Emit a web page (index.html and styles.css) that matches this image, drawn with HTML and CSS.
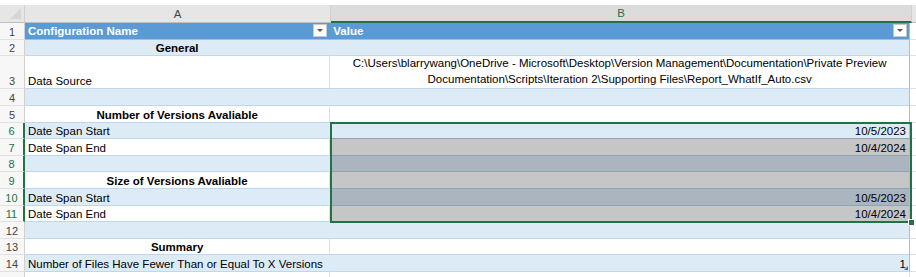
FILE: index.html
```html
<!DOCTYPE html>
<html lang="en">
<head>
  <meta charset="UTF-8" />
  <title>Configuration</title>
  <link rel="stylesheet" href="styles.css">
</head>
<body>
  <div class="sheet">
    <div class="head-row">
      <div class="corner"><span class="tri"></span></div>
      <div class="col-head a">A</div>
      <div class="col-head b on">B</div>
      <div class="col-head c"></div>
    </div>

    <div class="row title">
      <div class="rn">1</div>
      <div class="cell a"><span>Configuration Name</span><span class="filter"></span></div>
      <div class="cell b"><span>Value</span><span class="filter"></span></div>
      <div class="cell c"></div>
    </div>
    <div class="row band">
      <div class="rn">2</div>
      <div class="cell a center bold">General</div>
      <div class="cell b"></div>
      <div class="cell c"></div>
    </div>
    <div class="row tall">
      <div class="rn">3</div>
      <div class="cell a">Data Source</div>
      <div class="cell b center">C:\Users\blarrywang\OneDrive - Microsoft\Desktop\Version Management\Documentation\Private Preview<br>Documentation\Scripts\Iteration 2\Supporting Files\Report_WhatIf_Auto.csv</div>
      <div class="cell c"></div>
    </div>
    <div class="row band">
      <div class="rn">4</div>
      <div class="cell a"></div>
      <div class="cell b"></div>
      <div class="cell c"></div>
    </div>
    <div class="row">
      <div class="rn">5</div>
      <div class="cell a center bold">Number of Versions Avaliable</div>
      <div class="cell b"></div>
      <div class="cell c"></div>
    </div>
    <div class="row band picked">
      <div class="rn">6</div>
      <div class="cell a">Date Span Start</div>
      <div class="cell b right">10/5/2023</div>
      <div class="cell c"></div>
    </div>
    <div class="row picked">
      <div class="rn">7</div>
      <div class="cell a">Date Span End</div>
      <div class="cell b sel right">10/4/2024</div>
      <div class="cell c"></div>
    </div>
    <div class="row band picked">
      <div class="rn">8</div>
      <div class="cell a"></div>
      <div class="cell b sel"></div>
      <div class="cell c"></div>
    </div>
    <div class="row picked">
      <div class="rn">9</div>
      <div class="cell a center bold">Size of Versions Avaliable</div>
      <div class="cell b sel"></div>
      <div class="cell c"></div>
    </div>
    <div class="row band picked">
      <div class="rn">10</div>
      <div class="cell a">Date Span Start</div>
      <div class="cell b sel right">10/5/2023</div>
      <div class="cell c"></div>
    </div>
    <div class="row picked">
      <div class="rn">11</div>
      <div class="cell a">Date Span End</div>
      <div class="cell b sel right">10/4/2024</div>
      <div class="cell c"></div>
    </div>
    <div class="row band">
      <div class="rn">12</div>
      <div class="cell a"></div>
      <div class="cell b"></div>
      <div class="cell c"></div>
    </div>
    <div class="row">
      <div class="rn">13</div>
      <div class="cell a center bold">Summary</div>
      <div class="cell b"></div>
      <div class="cell c"></div>
    </div>
    <div class="row band last">
      <div class="rn">14</div>
      <div class="cell a">Number of Files Have Fewer Than or Equal To X Versions</div>
      <div class="cell b right">1<span class="resize"></span></div>
      <div class="cell c"></div>
    </div>
    <div class="row outside">
      <div class="rn"></div>
      <div class="cell a"></div>
      <div class="cell b"></div>
      <div class="cell c"></div>
    </div>

    <div class="selection"><span class="handle"></span></div>
  </div>
</body>
</html>
```

FILE: styles.css
```css
* {
  margin: 0;
  padding: 0;
  box-sizing: border-box;
}

body {
  background-color: #ffffff;
  font-family: 'Liberation Sans', Arial, sans-serif;
  font-size: 11.5px;
  color: #000000;
  overflow: hidden;
}

.sheet {
  position: relative;
  padding-top: 5px;
  width: 916px;
}

.head-row,
.row {
  display: flex;
}

.head-row {
  height: 18px;
}

.corner {
  width: 25px;
  background-color: #e6e6e6;
  border-right: 1px solid #d0d0d0;
  border-bottom: 1px solid #c0c0c0;
  display: flex;
  align-items: flex-end;
  justify-content: flex-end;
  padding: 0 3px 3px 0;
}

.corner .tri {
  width: 0;
  height: 0;
  border-left: 11px solid transparent;
  border-bottom: 11px solid #d6d6d6;
}

.col-head {
  background-color: #e6e6e6;
  border-right: 1px solid #d0d0d0;
  border-bottom: 1px solid #c0c0c0;
  color: #444444;
  display: flex;
  align-items: center;
  justify-content: center;
}

.col-head.on {
  background-color: #dcdcdc;
  color: #217346;
  border-bottom: 2px solid #217346;
}

.col-head.c {
  border-right: none;
}

.a {
  width: 306px;
}

.b {
  width: 581px;
}

.c {
  flex: 1;
}

.row {
  height: 16.6px;
}

.row.tall {
  height: 33.2px;
}

.rn {
  width: 25px;
  background-color: #f7f7f7;
  border-right: 1px solid #d0d0d0;
  border-bottom: 1px solid #e1e1e1;
  color: #444444;
  font-size: 11px;
  display: flex;
  align-items: flex-end;
  justify-content: center;
  padding-bottom: 1px;
}

.picked .rn {
  color: #217346;
  border-right: 2px solid #217346;
}

.cell {
  display: flex;
  align-items: flex-end;
  padding: 0 3px 1px 3px;
  white-space: nowrap;
  overflow: hidden;
  border-bottom: 1px solid #bdd7ee;
}

.cell.a {
  border-right: 1px solid #e2e2e2;
}

.cell.b {
  border-right: 1px solid #9bc2e6;
}

.cell.c {
  border-bottom: 1px solid #e1e1e1;
  border-right: none;
}

.band .cell.a,
.band .cell.b {
  background-color: #ddebf7;
}

.band .cell.a {
  border-right-color: #ddebf7;
}

.cell.center {
  justify-content: center;
  text-align: center;
}

.cell.right {
  justify-content: flex-end;
}

.cell.bold {
  font-weight: bold;
}

.tall .cell.b {
  line-height: 16px;
}

/* header row of the table */
.title .cell.a,
.title .cell.b {
  background-color: #5b9bd5;
  color: #ffffff;
  font-weight: bold;
  justify-content: space-between;
  align-items: center;
  padding: 0 2px 0 3px;
  border-bottom: 1px solid #9bc2e6;
}

.title .cell.a {
  border-right: 1px solid #5b9bd5;
}

.filter {
  width: 14px;
  height: 13px;
  background-color: #ffffff;
  border: 1px solid #c6c6c6;
  display: flex;
  align-items: center;
  justify-content: center;
}

.filter::after {
  content: "";
  width: 0;
  height: 0;
  border-left: 3px solid transparent;
  border-right: 3px solid transparent;
  border-top: 3px solid #555555;
}

/* selected range */
.cell.sel {
  background-color: #c6c6c6;
  border-bottom-color: #8fa2b6;
}

.band .cell.sel {
  background-color: #abb5c0;
}

.picked .cell.b {
  border-bottom-color: #8fa2b6;
}

.outside .cell.a,
.outside .cell.b {
  border-bottom: 1px solid #e1e1e1;
  border-right: 1px solid #e1e1e1;
}

.last .cell.b {
  position: relative;
}

.resize {
  position: absolute;
  right: 1px;
  bottom: 1px;
  width: 0;
  height: 0;
  border-left: 4px solid transparent;
  border-bottom: 4px solid #4472c4;
}

.selection {
  position: absolute;
  left: 330px;
  top: 122px;
  width: 582px;
  height: 101px;
  border: 2px solid #217346;
  pointer-events: none;
}

.handle {
  position: absolute;
  right: -5px;
  bottom: -5px;
  width: 7px;
  height: 7px;
  background-color: #217346;
  border: 1px solid #ffffff;
}
```
